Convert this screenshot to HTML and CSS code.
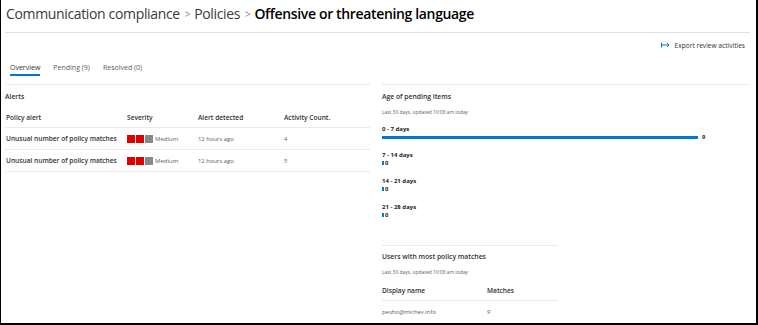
FILE: index.html
```html
<!DOCTYPE html>
<html>
<head>
<meta charset="utf-8">
<link rel="stylesheet" href="styles.css">
</head>
<body>
<div class="frame">
  <header class="title-bar">
    <h1 class="title"><span class="crumb">Communication compliance</span><span class="sep">&gt;</span><span class="crumb">Policies</span><span class="sep">&gt;</span><span class="current">Offensive or threatening language</span></h1>
  </header>
  <div class="actions">
    <a class="export">
      <svg class="export-icon" width="9" height="6" viewBox="0 0 9 6"><path d="M0.5 0.5v5M0.5 3h7.5M6 1l2 2-2 2" fill="none" stroke="#0078d4" stroke-width="1"/></svg>
      <span>Export review activities</span>
    </a>
  </div>
  <nav class="tabs">
    <span class="tab active">Overview</span>
    <span class="tab">Pending (9)</span>
    <span class="tab">Resolved (0)</span>
  </nav>
  <main class="content">
    <section class="panel alerts">
      <h2 class="panel-title">Alerts</h2>
      <div class="table">
        <div class="row head">
          <span class="c1">Policy alert</span><span class="c2">Severity</span><span class="c3">Alert detected</span><span class="c4">Activity Count.</span>
        </div>
        <div class="row">
          <span class="c1 strong">Unusual number of policy matches</span>
          <span class="c2 sev"><i class="sq red"></i><i class="sq red"></i><i class="sq gray"></i><span class="sev-label">Medium</span></span>
          <span class="c3">12 hours ago</span><span class="c4">4</span>
        </div>
        <div class="row">
          <span class="c1 strong">Unusual number of policy matches</span>
          <span class="c2 sev"><i class="sq red"></i><i class="sq red"></i><i class="sq gray"></i><span class="sev-label">Medium</span></span>
          <span class="c3">12 hours ago</span><span class="c4">5</span>
        </div>
      </div>
    </section>
    <section class="panel side">
      <h2 class="panel-title">Age of pending items</h2>
      <p class="sub">Last 30 days, updated 10:08 am today</p>
      <div class="bars">
        <div class="bar-item">
          <div class="bar-label">0 - 7 days</div>
          <div class="bar-line"><span class="bar" style="width:316px"></span><span class="bar-val">9</span></div>
        </div>
        <div class="bar-item">
          <div class="bar-label">7 - 14 days</div>
          <div class="bar-line"><span class="bar zero"></span><span class="bar-val">0</span></div>
        </div>
        <div class="bar-item">
          <div class="bar-label">14 - 21 days</div>
          <div class="bar-line"><span class="bar zero"></span><span class="bar-val">0</span></div>
        </div>
        <div class="bar-item">
          <div class="bar-label">21 - 28 days</div>
          <div class="bar-line"><span class="bar zero"></span><span class="bar-val">0</span></div>
        </div>
      </div>
      <div class="users">
        <h2 class="panel-title">Users with most policy matches</h2>
        <p class="sub">Last 30 days, updated 10:08 am today</p>
        <div class="utable">
          <div class="urow head"><span class="u1">Display name</span><span class="u2">Matches</span></div>
          <div class="urow"><span class="u1">pesho@michev.info</span><span class="u2">9</span></div>
        </div>
      </div>
    </section>
  </main>
</div>
</body>
</html>
```
FILE: styles.css
```css
* { box-sizing: border-box; margin: 0; padding: 0; }
html, body { width: 758px; height: 325px; overflow: hidden; background: #fff; }
body { font-family: "Open Sans", "Noto Sans", sans-serif; color: #323130; }
.frame {
  width: 758px; height: 325px;
  border-left: 1px solid #000; border-right: 2px solid #000; border-bottom: 2px solid #000;
  padding: 0 6px 0 4px;
  overflow: hidden;
}
.title-bar { height: 33px; border-bottom: 1px solid #e1dfdd; padding-top: 2px; }
.title { font-size: 14px; font-weight: 400; line-height: 24px; color: #3b3a39; white-space: nowrap; letter-spacing: -0.35px; padding-left: 1px; }
.sep { font-size: 10px; color: #8a8886; margin: 0 4px 0 5px; position: relative; top: -1px; }
.current { font-weight: 600; color: #000; }
.actions { display: flex; justify-content: flex-end; padding: 4px 5px 0 0; height: 20px; }
.export { display: flex; align-items: center; gap: 5px; font-size: 6.6px; color: #323130; }
.tabs { display: flex; gap: 13px; padding: 10px 0 0 5px; height: 31px; }
.tab { font-size: 7px; color: #605e5c; height: 13px; line-height: 9px; }
.tab.active { color: #323130; border-bottom: 2px solid #0078d4; }
.content { display: flex; gap: 12px; }
.panel { border-top: 1px solid #edebe9; }
.alerts { width: 365px; }
.side { width: 366px; }
.panel-title { font-size: 6.8px; font-weight: 600; color: #323130; line-height: 10px; margin-top: 7px; }
.table { margin-top: 5px; }
.row { display: flex; align-items: center; height: 22px; border-bottom: 1px solid #edebe9; font-size: 5.9px; }
.row.head { height: 21px; font-weight: 600; font-size: 6.6px; color: #323130; }
.c1 { width: 122px; padding-left: 1px; }
.c2 { width: 71px; }
.c3 { width: 86px; color: #605e5c; }
.c4 { flex: 1; color: #605e5c; }
.row.head .c3, .row.head .c4 { color: #323130; }
.strong { font-weight: 600; color: #323130; font-size: 6.6px; }
.sev { display: flex; align-items: center; }
.sq { display: block; width: 8px; height: 8px; margin-right: 1px; }
.sq.red { background: #e00000; }
.sq.gray { background: #8a8886; }
.sev-label { margin-left: 1px; color: #605e5c; font-size: 6px; }
.sub { font-size: 4.9px; color: #605e5c; margin-top: 7px; line-height: 6px; }
.bars { margin-top: 10px; }
.bar-item { height: 26px; }
.bar-label { font-size: 6px; font-weight: 700; color: #201f1e; line-height: 9px; }
.bar-line { display: flex; align-items: center; height: 6px; }
.bar { display: block; height: 3px; background: #0078d4; }
.bar.zero { width: 2px; height: 4px; }
.bar-val { font-size: 5.8px; font-weight: 700; margin-left: 4px; color: #201f1e; }
.bar-line .zero + .bar-val { margin-left: 1px; }
.users { width: 176px; border-top: 1px solid #edebe9; margin-top: 16px; }
.users .panel-title { margin-top: 6px; }
.users .sub { margin-top: 7px; }
.utable { margin-top: 5px; }
.urow { display: flex; align-items: center; height: 21px; font-size: 5.9px; color: #605e5c; }
.urow.head { font-size: 6.6px; font-weight: 600; color: #323130; border-bottom: 1px solid #edebe9; }
.u1 { width: 105px; }
```
